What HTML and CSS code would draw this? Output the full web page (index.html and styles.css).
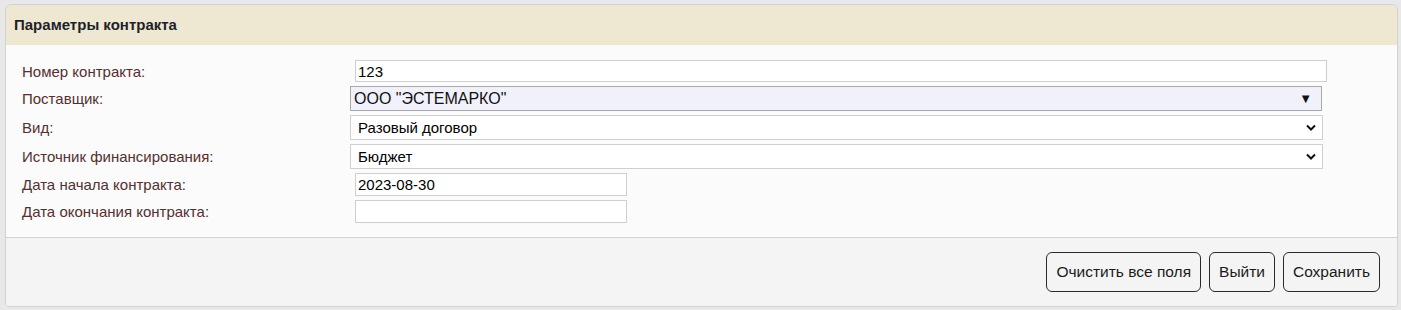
FILE: index.html
```html
<!DOCTYPE html>
<html lang="ru">
<head>
  <meta charset="UTF-8">
  <title>Параметры контракта</title>
  <link rel="stylesheet" href="styles.css">
</head>
<body>
  <div class="panel">
    <div class="panel-header">Параметры контракта</div>

    <!-- Form rows -->
    <div class="panel-body">
      <label class="field-label" for="number">Номер контракта:</label>
      <div class="field"><input type="text" class="text-input wide" id="number" value="123"></div>

      <label class="field-label">Поставщик:</label>
      <div class="field">
        <div class="combo">
          <span class="combo-text">ООО "ЭСТЕМАРКО"</span>
          <span class="combo-arrow">&#9660;</span>
        </div>
      </div>

      <label class="field-label" for="kind">Вид:</label>
      <div class="field select-wrap">
        <select class="select-box" id="kind">
          <option>Разовый договор</option>
        </select>
        <svg class="chevron" width="10" height="7" viewBox="0 0 10 7"><path d="M1 1.5 L5 5.5 L9 1.5" fill="none" stroke="#111" stroke-width="2"/></svg>
      </div>

      <label class="field-label" for="source">Источник финансирования:</label>
      <div class="field select-wrap">
        <select class="select-box" id="source">
          <option>Бюджет</option>
        </select>
        <svg class="chevron" width="10" height="7" viewBox="0 0 10 7"><path d="M1 1.5 L5 5.5 L9 1.5" fill="none" stroke="#111" stroke-width="2"/></svg>
      </div>

      <label class="field-label" for="start">Дата начала контракта:</label>
      <div class="field"><input type="text" class="text-input date" id="start" value="2023-08-30"></div>

      <label class="field-label" for="end">Дата окончания контракта:</label>
      <div class="field"><input type="text" class="text-input date" id="end" value=""></div>
    </div>

    <!-- Buttons -->
    <div class="panel-footer">
      <button class="btn">Очистить все поля</button>
      <button class="btn">Выйти</button>
      <button class="btn">Сохранить</button>
    </div>
  </div>
</body>
</html>
```

FILE: styles.css
```css
body {
  margin: 0;
  padding: 4px 3px 3px 5px;
  background: #e7e8e7;
  font-family: "Liberation Sans", Arial, sans-serif;
}
.panel {
  border: 1px solid #d2d2d2;
  border-radius: 6px 6px 4px 4px;
  overflow: hidden;
}
.panel-header {
  height: 40px;
  line-height: 40px;
  padding-left: 8px;
  background: #eee8d2;
  font-size: 15px;
  font-weight: bold;
  color: #1f1f28;
}
/* Label column + control column */
.panel-body {
  display: grid;
  grid-template-columns: 328px 973px;
  row-gap: 4px;
  padding: 15px 0 14px 16px;
  background: #fbfbfb;
  border-bottom: 1px solid #d2d2d2;
}
.field-label {
  display: flex;
  align-items: center;
  font-size: 15px;
  color: #553030;
}
.field {
  display: flex;
  align-items: center;
}
.text-input {
  flex-shrink: 0;
  box-sizing: border-box;
  height: 22px;
  margin: 0 0 0 5px;
  padding: 0 2px;
  border: 1px solid #cfcfcf;
  background: #fff;
  font-family: inherit;
  font-size: 15px;
  color: #000;
  outline: none;
}
.text-input.wide {
  width: 972px;
}
.text-input.date {
  width: 272px;
  height: 23px;
}
.combo {
  box-sizing: border-box;
  width: 972px;
  height: 25px;
  display: flex;
  align-items: center;
  justify-content: space-between;
  padding: 0 9px 0 3px;
  border: 1px solid #a9a9a9;
  background: #f1f1fc;
  font-size: 16px;
  color: #111;
}
.combo-arrow {
  font-size: 13px;
}
.select-wrap {
  position: relative;
}
.select-box {
  -webkit-appearance: none;
  appearance: none;
  box-sizing: border-box;
  width: 973px;
  height: 25px;
  margin: 0;
  padding: 0 0 0 7px;
  border: 1px solid #d0d0d0;
  border-radius: 0;
  background: #fff;
  font-family: inherit;
  font-size: 15px;
  color: #000;
}
.chevron {
  position: absolute;
  right: 7px;
  top: 9px;
  pointer-events: none;
}
.panel-footer {
  display: flex;
  justify-content: flex-end;
  gap: 8px;
  padding: 14px 17px 14px 0;
  background: #f4f4f4;
}
.btn {
  height: 40px;
  padding: 0 9px;
  border: 1px solid #2a2a2a;
  border-radius: 6px;
  background: #f4f4f4;
  font-family: inherit;
  font-size: 15.5px;
  color: #1a1a1a;
}
```
